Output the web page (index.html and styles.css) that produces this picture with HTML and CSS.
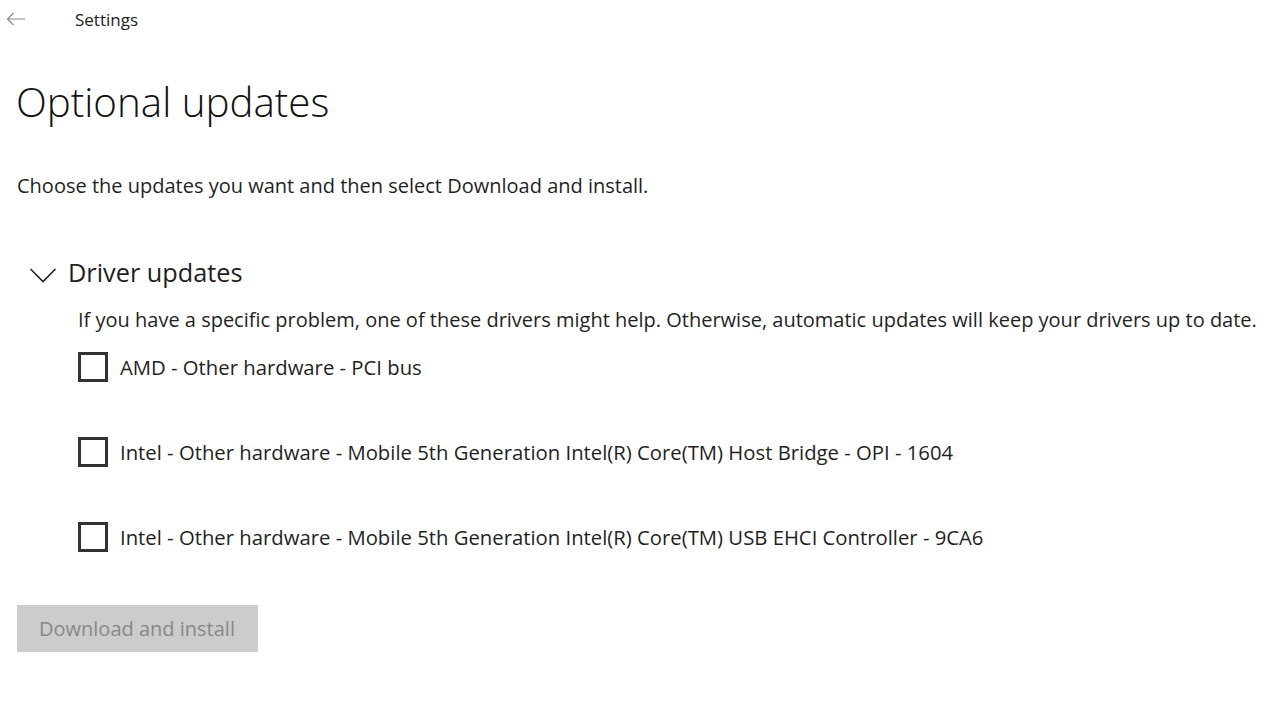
FILE: index.html
```html
<!DOCTYPE html>
<html>
<head>
<meta charset="utf-8">
<link rel="stylesheet" href="styles.css">
</head>
<body>
<header class="titlebar">
  <span class="back"><svg width="20" height="14" viewBox="0 0 20 14"><path d="M19 7H1.5M7.5 1L1.5 7l6 6" fill="none" stroke="#8a8a8a" stroke-width="1.2"/></svg></span>
  <span class="app">Settings</span>
</header>
<main class="page">
  <h1 class="title">Optional updates</h1>
  <p class="intro">Choose the updates you want and then select Download and install.</p>
  <section class="group">
    <div class="group-head">
      <svg class="chev" width="28" height="16" viewBox="0 0 28 16"><path d="M1.5 2l12.5 12.5L26.5 2" fill="none" stroke="#222" stroke-width="1.6"/></svg>
      <h2 class="group-title">Driver updates</h2>
    </div>
    <div class="group-body">
      <p class="hint">If you have a specific problem, one of these drivers might help. Otherwise, automatic updates will keep your drivers up to date.</p>
      <ul class="list">
        <li class="item"><span class="box"></span><span class="label">AMD - Other hardware - PCI bus</span></li>
        <li class="item"><span class="box"></span><span class="label">Intel - Other hardware - Mobile 5th Generation Intel(R) Core(TM) Host Bridge - OPI - 1604</span></li>
        <li class="item"><span class="box"></span><span class="label">Intel - Other hardware - Mobile 5th Generation Intel(R) Core(TM) USB EHCI Controller - 9CA6</span></li>
      </ul>
    </div>
  </section>
  <button class="btn" disabled>Download and install</button>
</main>
</body>
</html>
```
FILE: styles.css
```css
* { box-sizing: border-box; }
html, body { margin: 0; padding: 0; background: #fff; }
body { font-family: "Open Sans", "Noto Sans", sans-serif; color: #1f1f1f; width: 1280px; height: 723px; overflow: hidden; }
.titlebar { display: flex; align-items: center; height: 38px; }
.back { width: 75px; padding-left: 6px; display: flex; align-items: center; }
.app { font-size: 17px; color: #222; }
.page { padding-left: 16px; }
.title { margin: 39px 0 0; font-weight: 300; font-size: 40.3px; line-height: 50px; color: #111; }
.intro { margin: 45px 0 0 1px; font-size: 20px; line-height: 28px; }
.group { margin-top: 57px; }
.group-head { display: flex; align-items: center; height: 30px; }
.chev { margin-left: 13px; margin-right: 11px; margin-top: 6px; }
.group-title { margin: 0; font-weight: 400; font-size: 25.3px; line-height: 30px; }
.group-body { padding-left: 62px; }
.hint { margin: 19px 0 0; font-size: 20px; line-height: 28px; }
.list { list-style: none; margin: 18px 0 0; padding: 0; display: flex; flex-direction: column; gap: 55px; }
.item { display: flex; align-items: center; height: 30px; }
.box { width: 30px; height: 30px; border: 3px solid #333; margin-right: 12px; }
.label { font-size: 20.3px; }
.btn { margin: 53px 0 0 1px; width: 241px; height: 47px; background: #ccc; border: none; font-family: inherit; font-size: 20px; color: #888; text-align: left; padding-left: 22px; }
```
